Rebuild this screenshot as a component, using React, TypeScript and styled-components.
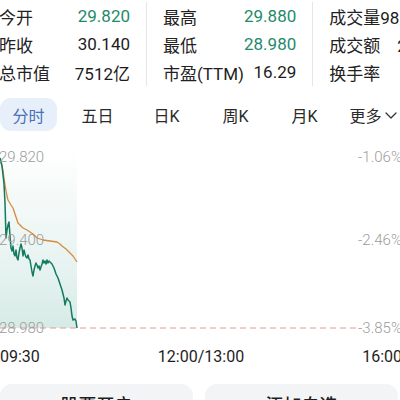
import React from 'react';
import styled, { createGlobalStyle } from 'styled-components';

const GlobalStyle = createGlobalStyle`
  html, body {
    margin: 0;
    padding: 0;
    background: #ffffff;
    overflow: hidden;
  }
  body {
    width: 400px;
    height: 400px;
    font-family: Roboto, "Noto Sans CJK SC", sans-serif;
    color: #222222;
  }
`;

const StyledPage = styled.div`
  display: flex;
  flex-direction: column;
  width: 400px;
  height: 400px;
  overflow: hidden;
`;

const StyledStats = styled.div`
  display: flex;
  flex-direction: row;
  margin: 2px 0 0 -1px;
  white-space: nowrap;
`;

interface IStyledCol {
  width: number;
  first?: boolean;
  last?: boolean;
}

const StyledCol = styled.div<IStyledCol>`
  display: grid;
  grid-template-columns: auto 1fr;
  grid-auto-rows: 28px;
  align-items: center;
  flex: 0 0 ${({ width }) => width}px;
  box-sizing: border-box;
  padding: 0 ${({ last }) => (last ? 0 : 16)}px 0
    ${({ first }) => (first ? 0 : 16)}px;
  border-right: ${({ last }) => (last ? 'none' : '1px solid #e6e6e6')};
  font-size: 17px;
`;

const StyledLabel = styled.span`
  color: #222222;
`;

interface IStyledValue {
  green?: boolean;
}

const StyledValue = styled.span<IStyledValue>`
  text-align: right;
  color: ${({ green }) => (green ? '#1f8a6a' : '#1c1c1c')};
`;

const StyledTabs = styled.div`
  display: flex;
  flex-direction: row;
  gap: 12px;
  margin-top: 12px;
`;

interface IStyledTab {
  active?: boolean;
}

const StyledTab = styled.div<IStyledTab>`
  display: flex;
  justify-content: center;
  align-items: center;
  flex: 0 0 57px;
  height: 33px;
  border-radius: 11px;
  font-size: 16px;
  background: ${({ active }) => (active ? '#e7effa' : 'transparent')};
  color: ${({ active }) => (active ? '#4a70b8' : '#2a2a2a')};
  white-space: nowrap;
`;

const StyledChevron = styled.svg`
  margin-left: 2px;
`;

const StyledChart = styled.div`
  position: relative;
  height: 190px;
  margin-top: 15px;
`;

interface IStyledAxis {
  top: number;
  side: 'left' | 'right';
}

const StyledAxis = styled.span<IStyledAxis>`
  position: absolute;
  top: ${({ top }) => top - 9}px;
  ${({ side }) => (side === 'left' ? 'left: -1px;' : 'right: -2px;')}
  font-size: 15px;
  line-height: 18px;
  font-weight: 300;
  color: #9c9c9c;
`;

const StyledTimes = styled.div`
  display: flex;
  flex-direction: row;
  justify-content: space-between;
  margin: 11px -2px 0 0;
  font-size: 16px;
  line-height: 20px;
  color: #1e1e1e;
`;

const StyledButtons = styled.div`
  display: grid;
  grid-template-columns: 193px 193px;
  gap: 12px;
  margin-top: 17px;
`;

const StyledButton = styled.div`
  display: flex;
  justify-content: center;
  align-items: center;
  height: 40px;
  border-radius: 12px;
  background: #f3f4f6;
  font-size: 18px;
  font-weight: 500;
  color: #1e1e1e;
`;

const TOP = 148;

const green: [number, number][] = [
  [0, 160], [2, 168], [4, 186], [5, 205], [6, 240], [7, 232], [8, 227],
  [9, 224], [10, 238], [11, 250], [12, 253], [13, 248], [14, 256],
  [15, 258], [16, 252], [17, 260], [18, 262], [19, 255], [20, 250],
  [21, 246], [22, 250], [23, 258], [24, 252], [25, 256], [26, 259],
  [27, 260], [28, 257], [29, 261], [30, 262], [31, 268], [32, 274],
  [33, 278], [34, 272], [35, 268], [36, 265], [37, 267], [38, 270],
  [39, 268], [40, 272], [41, 269], [42, 266], [43, 262], [44, 265],
  [45, 263], [46, 266], [47, 262], [48, 265], [49, 263], [50, 264],
  [52, 266], [54, 270], [55, 273], [56, 276], [58, 280], [60, 286],
  [62, 292], [64, 300], [65, 307], [66, 303], [67, 300], [68, 302],
  [70, 304], [71, 310], [72, 318], [73, 322], [75, 321], [76, 323],
  [77, 330],
];

const average: [number, number][] = [
  [0, 160], [2, 168], [3, 173], [5, 187], [7, 198], [8, 202], [11, 207],
  [13, 210], [15, 216], [18, 225], [20, 227], [23, 230], [27, 232],
  [30, 234], [33, 236], [37, 240], [40, 241], [43, 242], [50, 243],
  [57, 244], [60, 246], [62, 248], [66, 251], [70, 255], [73, 258],
  [75, 261], [77, 264],
];

const toPath = (pts: [number, number][]) =>
  pts
    .map(([x, y], i) => `${i === 0 ? 'M' : 'L'}${x} ${y - TOP}`)
    .join(' ');

const stats = [
  {
    width: 148,
    first: true,
    rows: [
      { label: '今开', value: '29.820', green: true },
      { label: '昨收', value: '30.140' },
      { label: '总市值', value: '7512亿' },
    ],
  },
  {
    width: 163,
    rows: [
      { label: '最高', value: '29.880', green: true },
      { label: '最低', value: '28.980', green: true },
      { label: '市盈(TTM)', value: '16.29' },
    ],
  },
  {
    width: 120,
    last: true,
    rows: [
      { label: '成交量', value: '98万手' },
      { label: '成交额', value: '29亿' },
      { label: '换手率', value: '--' },
    ],
  },
];

const tabs = ['分时', '五日', '日K', '周K', '月K'];

export default function App() {
  return (
    <StyledPage>
      <GlobalStyle />
      <StyledStats>
        {stats.map((col, c) => (
          <StyledCol
            key={c}
            width={col.width}
            first={col.first}
            last={col.last}
          >
            {col.rows.map((r) => (
              <React.Fragment key={r.label}>
                <StyledLabel>{r.label}</StyledLabel>
                <StyledValue green={r.green}>{r.value}</StyledValue>
              </React.Fragment>
            ))}
          </StyledCol>
        ))}
      </StyledStats>
      <StyledTabs>
        {tabs.map((t, i) => (
          <StyledTab key={t} active={i === 0}>
            {t}
          </StyledTab>
        ))}
        <StyledTab>
          更多
          <StyledChevron width="14" height="14" viewBox="0 0 14 14">
            <path
              d="M2 5 L7 10 L12 5"
              fill="none"
              stroke="#333"
              strokeWidth="1.3"
              strokeLinecap="round"
              strokeLinejoin="round"
            />
          </StyledChevron>
        </StyledTab>
      </StyledTabs>
      <StyledChart>
        <svg width="400" height="190" viewBox="0 0 400 190">
          <defs>
            <linearGradient id="fill" x1="0" y1="0" x2="0" y2="1">
              <stop offset="0" stopColor="#e3f1ee" stopOpacity="0" />
              <stop offset="0.25" stopColor="#e3f1ee" stopOpacity="0.35" />
              <stop offset="1" stopColor="#d6ebe6" stopOpacity="1" />
            </linearGradient>
          </defs>
          <rect x="0" y={152 - TOP} width="77" height={178} fill="url(#fill)" />
          <line
            x1="0"
            y1={330 - TOP}
            x2="356"
            y2={330 - TOP}
            stroke="#e39a9a"
            strokeWidth="1"
            strokeDasharray="6 4"
          />
          <path
            d={toPath(average)}
            fill="none"
            stroke="#d88a3c"
            strokeWidth="1.3"
            strokeLinejoin="round"
          />
          <path
            d={toPath(green)}
            fill="none"
            stroke="#137a60"
            strokeWidth="1.5"
            strokeLinejoin="round"
          />
        </svg>
        <StyledAxis side="left" top={159 - TOP}>29.820</StyledAxis>
        <StyledAxis side="left" top={242 - TOP}>29.400</StyledAxis>
        <StyledAxis side="left" top={330 - TOP}>28.980</StyledAxis>
        <StyledAxis side="right" top={159 - TOP}>-1.06%</StyledAxis>
        <StyledAxis side="right" top={242 - TOP}>-2.46%</StyledAxis>
        <StyledAxis side="right" top={330 - TOP}>-3.85%</StyledAxis>
      </StyledChart>
      <StyledTimes>
        <span>09:30</span>
        <span>12:00/13:00</span>
        <span>16:00</span>
      </StyledTimes>
      <StyledButtons>
        <StyledButton>股票开户</StyledButton>
        <StyledButton>添加自选</StyledButton>
      </StyledButtons>
    </StyledPage>
  );
}
